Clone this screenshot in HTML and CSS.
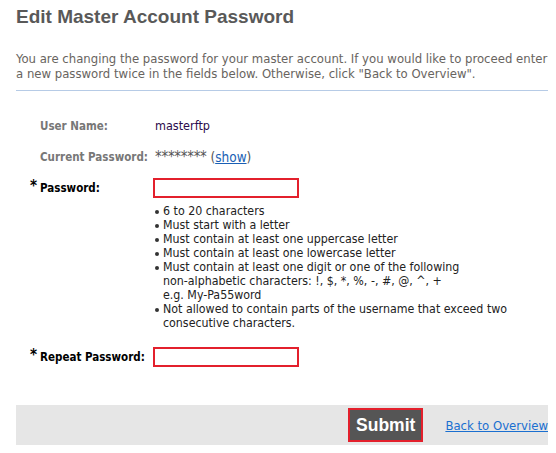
FILE: index.html
```html
<!DOCTYPE html>
<html lang="en">

<head>
    <meta charset="UTF-8">
    <meta name="viewport" content="width=device-width, initial-scale=1.0">
    <title>Edit Master Account Password</title>
    <link rel="stylesheet" href="styles.css">
</head>

<body>
    <div class="page">
        <h1>Edit Master Account Password</h1>
        <p class="intro">You are changing the password for your master account. If you would like to proceed enter a new password twice in the fields below. Otherwise, click "Back to Overview".</p>

        <form class="form">
            <div class="row info">
                <span class="star"></span>
                <label>User Name:</label>
                <span class="value user">masterftp</span>
            </div>
            <div class="row info">
                <span class="star"></span>
                <label>Current Password:</label>
                <span class="value"><span class="dots">********</span> (<a href="#">show</a>)</span>
            </div>
            <div class="row field">
                <span class="star">*</span>
                <label for="pw">Password:</label>
                <input type="password" id="pw">
            </div>
            <ul class="rules">
                <li>6 to 20 characters</li>
                <li>Must start with a letter</li>
                <li>Must contain at least one uppercase letter</li>
                <li>Must contain at least one lowercase letter</li>
                <li>Must contain at least one digit or one of the following <span class="nowrap">non-alphabetic</span> characters: !, $, *, %, -, #, @, ^, +<br>e.g. My-Pa55word</li>
                <li>Not allowed to contain parts of the username that exceed two consecutive characters.</li>
            </ul>
            <div class="row field">
                <span class="star">*</span>
                <label for="pw2">Repeat Password:</label>
                <input type="password" id="pw2">
            </div>

            <div class="actions">
                <button type="button" class="submit">Submit</button>
                <a href="#" class="back">Back to Overview</a>
            </div>
        </form>
    </div>
</body>

</html>
```

FILE: styles.css
```css
body {
    margin: 0;
    background: #fff;
    font-family: "DejaVu Sans Condensed", "DejaVu Sans", sans-serif;
    font-stretch: semi-condensed;
}

.page {
    padding: 5px 8px 0 16px;
}

h1 {
    margin: 0;
    font-family: "Liberation Sans", Arial, sans-serif;
    font-size: 19px;
    line-height: 23px;
    color: #595959;
}

.intro {
    margin: 23px 0 0;
    padding-bottom: 9px;
    border-bottom: 1px solid #b6cbe6;
    font-size: 13px;
    line-height: 15px;
    color: #686460;
}

.form {
    margin-top: 19px;
}

.row {
    display: grid;
    grid-template-columns: 24px 115px 1fr;
    align-items: center;
}

.info {
    height: 31px;
}

.row label {
    font-size: 11.5px;
    font-weight: bold;
    color: #777;
}

.value {
    font-size: 13.5px;
    color: #555;
}

.dots {
    font-size: 15px;
    letter-spacing: -0.3px;
}

.value.user {
    color: #2b0b4b;
    font-size: 12.5px;
}

.value a {
    color: #1a5fb4;
}

.star {
    font-size: 15px;
    font-weight: bold;
    text-align: right;
    padding-right: 3px;
    margin-top: -4px;
    color: #000;
}

.field {
    height: 31px;
}

.field label {
    color: #000;
}

.field input {
    width: 146px;
    height: 20px;
    box-sizing: border-box;
    border: 2px solid #e3202c;
    margin-left: -2px;
    padding: 0 3px;
    outline: none;
}

.rules {
    margin: 1px 0 0 139px;
    padding: 0;
    width: 358px;
    height: 137px;
    list-style: none;
    font-size: 12.3px;
    line-height: 14px;
    color: #222;
}

.rules li {
    position: relative;
    padding-left: 8px;
}

.rules li::before {
    content: "";
    position: absolute;
    left: 0;
    top: 6px;
    width: 4px;
    height: 4px;
    border-radius: 50%;
    background: #333;
}

.nowrap {
    white-space: nowrap;
}

.actions {
    margin-top: 33px;
    height: 40px;
    background: #e6e6e6;
    display: flex;
    align-items: center;
    justify-content: flex-end;
}

.submit {
    height: 34px;
    border: 2px solid #e3202c;
    background: #555;
    color: #fff;
    font-family: "Liberation Sans", Arial, sans-serif;
    font-size: 17.5px;
    font-weight: bold;
    padding: 0 6px;
    margin-right: 22px;
}

.back {
    font-size: 13px;
    color: #1a6fd0;
    white-space: nowrap;
}
```
